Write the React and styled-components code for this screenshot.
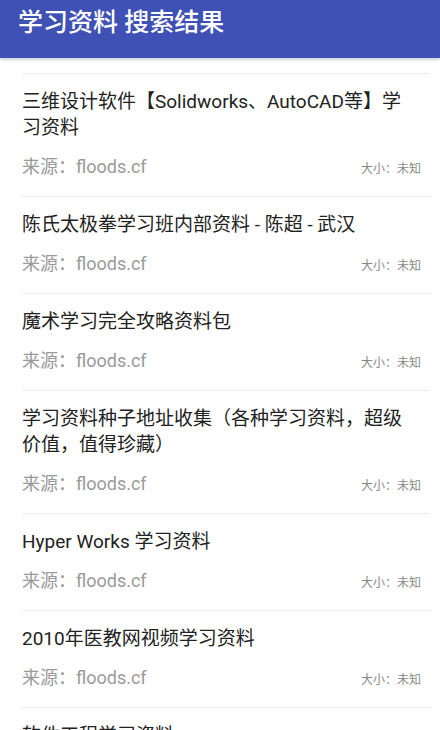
import React from 'react'
import styled, { createGlobalStyle } from 'styled-components'

const GlobalStyle = createGlobalStyle`
  html, body {
    margin: 0;
    padding: 0;
    background: #ffffff;
  }
  body {
    font-family: Roboto, "Noto Sans CJK SC", sans-serif;
    overflow: hidden;
  }
`

const results = [
  { title: '三维设计软件【Solidworks、AutoCAD等】学习资料' },
  { title: '陈氏太极拳学习班内部资料 - 陈超 - 武汉' },
  { title: '魔术学习完全攻略资料包' },
  { title: '学习资料种子地址收集（各种学习资料，超级价值，值得珍藏）' },
  { title: 'Hyper Works 学习资料' },
  { title: '2010年医教网视频学习资料' },
  { title: '软件工程学习资料' },
]

function App() {
  return (
    <Page>
      <GlobalStyle />
      <Header>
        <HeaderTitle>学习资料 搜索结果</HeaderTitle>
      </Header>
      <List>
        {results.map((r, i) => (
          <Item key={i}>
            <Title>{r.title}</Title>
            <Meta>
              <Source>来源：floods.cf</Source>
              <Size>大小：未知</Size>
            </Meta>
          </Item>
        ))}
      </List>
    </Page>
  )
}

const Page = styled.div`
  width: 440px;
  height: 730px;
  overflow: hidden;
  background: #fff;
`

const Header = styled.header`
  height: 58px;
  background-color: #3f51b5;
  box-shadow: 0 2px 3px rgba(0, 0, 0, 0.18);
  padding: 0 18px;
  box-sizing: border-box;
  position: relative;
  z-index: 1;
`

const HeaderTitle = styled.h1`
  margin: 0;
  color: #fff;
  font-size: 25px;
  font-weight: 500;
  line-height: 45px;
`

const List = styled.div`
  padding: 15px 10px 0 22px;
  display: flex;
  flex-direction: column;
`

const Item = styled.div`
  border-top: 1px solid #ececec;
  padding: 15px 0 16px;
`

const Title = styled.div`
  width: 390px;
  font-size: 19px;
  line-height: 26px;
  color: #222;
`

const Meta = styled.div`
  margin-top: 12px;
  display: flex;
  justify-content: space-between;
  align-items: baseline;
  padding-right: 9px;
`

const Source = styled.span`
  font-size: 18px;
  line-height: 27px;
  color: #9a9a9a;
`

const Size = styled.span`
  font-size: 12px;
  color: #888;
`

export default App
